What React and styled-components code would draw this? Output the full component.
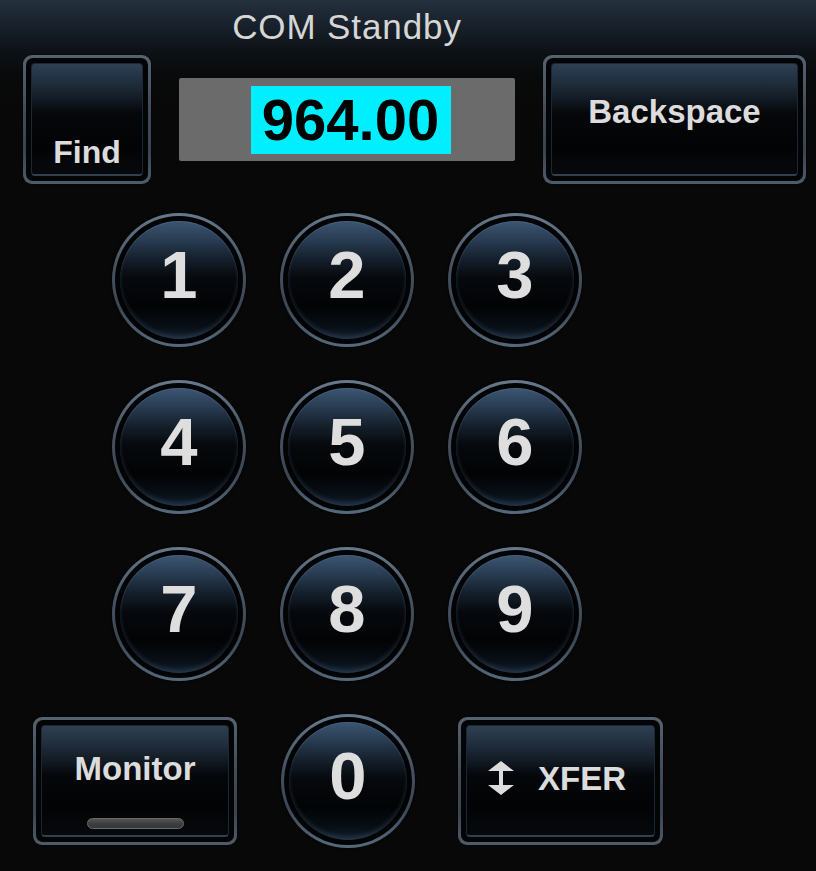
import React from "react";
import styled, { createGlobalStyle } from "styled-components";

const Global = createGlobalStyle`
  html, body { margin: 0; padding: 0; }
  body {
    width: 816px;
    height: 871px;
    overflow: hidden;
    background:
      linear-gradient(180deg, #24303d 0px, #18212b 25px, #0d1217 50px, #090a0b 75px, #080808 110px) no-repeat,
      #080808;
    font-family: "Liberation Sans", Arial, sans-serif;
  }
`;

const Page = styled.div`
  width: 816px;
  height: 871px;
  box-sizing: border-box;
`;

const Header = styled.div`
  display: grid;
  grid-template-columns: 128px 336px 263px;
  grid-template-rows: 50px 129px;
  column-gap: 28px;
  row-gap: 5px;
  padding-left: 23px;
`;

const Title = styled.div`
  grid-column: 2;
  grid-row: 1;
  display: flex;
  align-items: center;
  justify-content: center;
  color: #d6d6d6;
  font-size: 35px;
  letter-spacing: 0.9px;
  line-height: 1;
  padding-top: 2px;
`;

const Frame = styled.div`
  grid-row: ${(p) => p.$row || "auto"};
  width: ${(p) => p.$w}px;
  height: ${(p) => p.$h}px;
  box-sizing: border-box;
  border-radius: 9px;
  padding: 3px;
  background: linear-gradient(180deg, #56636f 0%, #404b57 45%, #3a4551 75%, #4e5c6a 100%);
  box-shadow: 0 0 2px rgba(0, 0, 0, 0.8);
`;

const Gap = styled.div`
  height: 100%;
  box-sizing: border-box;
  border-radius: 7px;
  padding: 5px;
  background: #030405;
`;

const Panel = styled.div`
  height: 100%;
  box-sizing: border-box;
  border-radius: 4px;
  border: 1px solid #1d2733;
  border-bottom: 2px solid #33404e;
  background: linear-gradient(
    180deg,
    #2e4053 0%,
    #1f2c3a 18%,
    #121a23 32%,
    #05070a 45%,
    #020304 75%,
    #06090c 100%
  );
  display: flex;
  flex-direction: column;
  align-items: center;
  justify-content: ${(p) => p.$justify || "center"};
  gap: ${(p) => p.$gap || 0}px;
  padding-bottom: ${(p) => p.$pb || 0}px;
  padding-right: ${(p) => p.$pr || 0}px;
  color: #dcdcdc;
  font-weight: bold;
  font-size: ${(p) => p.$fs || 33}px;
  line-height: 1;
`;

const Row = styled.div`
  display: flex;
  align-items: center;
  gap: ${(p) => p.$gap}px;
`;

const Label = styled.span`
  margin-top: ${(p) => p.$mt || 0}px;
`;

const Display = styled.div`
  grid-column: 2;
  grid-row: 2;
  align-self: center;
  height: 83px;
  background: #6b6b6b;
  border-radius: 2px;
  display: flex;
  align-items: center;
  justify-content: center;
  padding-left: 8px;
  box-sizing: border-box;
`;

const Freq = styled.div`
  background: #00effe;
  color: #000;
  font-weight: bold;
  font-size: 58px;
  height: 68px;
  line-height: 68px;
  padding: 0 12px 0 11px;
  box-sizing: border-box;
`;

const Keypad = styled.div`
  display: grid;
  grid-template-columns: repeat(3, 168px);
  grid-auto-rows: 167px;
  margin-top: 12px;
  padding-left: 95px;
  justify-items: center;
  align-items: center;
`;

const Ring = styled.div`
  width: 134px;
  height: 134px;
  box-sizing: border-box;
  border-radius: 50%;
  padding: 3px;
  background: linear-gradient(180deg, #66788a 0%, #45535f 40%, #3b4753 70%, #566a7d 100%);
  box-shadow: 0 0 3px rgba(0, 0, 0, 0.9);
`;

const RingGap = styled.div`
  width: 100%;
  height: 100%;
  box-sizing: border-box;
  border-radius: 50%;
  padding: 5px;
  background: #020305;
`;

const Disc = styled.div`
  width: 100%;
  height: 100%;
  box-sizing: border-box;
  border-radius: 50%;
  background: linear-gradient(
    180deg,
    #3c5672 0%,
    #2a3e54 15%,
    #15202c 32%,
    #06090d 48%,
    #020304 72%,
    #080f16 90%,
    #142230 100%
  );
  box-shadow: inset 0 -3px 4px rgba(90, 120, 150, 0.25), inset 0 1px 1px rgba(90, 120, 150, 0.4);
  display: flex;
  align-items: center;
  justify-content: center;
  padding-bottom: 10px;
  color: #dedede;
  font-weight: bold;
  font-size: 67px;
  line-height: 1;
`;

const Bottom = styled.div`
  display: flex;
  align-items: center;
  height: 167px;
  padding-left: 33px;
`;

const ZeroSlot = styled.div`
  margin: 0 43px 0 44px;
`;

const Bar = styled.div`
  width: 97px;
  height: 11px;
  box-sizing: border-box;
  border-radius: 6px;
  border: 1px solid #6a6a6a;
  background: linear-gradient(180deg, #555 0%, #3f3f3f 50%, #353535 100%);
`;

const Arrow = () => (
  <svg width="26" height="34" viewBox="0 0 26 34">
    <polygon points="13,0 26,10 15,10 15,24 26,24 13,34 0,24 11,24 11,10 0,10" fill="#dcdcdc" />
  </svg>
);

const Key = ({ n }) => (
  <Ring>
    <RingGap>
      <Disc>{n}</Disc>
    </RingGap>
  </Ring>
);

const RectButton = ({ w, h, row, children, ...rest }) => (
  <Frame $w={w} $h={h} $row={row}>
    <Gap>
      <Panel {...rest}>{children}</Panel>
    </Gap>
  </Frame>
);

export default function App() {
  return (
    <Page>
      <Global />
      <Header>
        <Title>COM Standby</Title>
        <RectButton w={128} h={129} row={2} $justify="flex-end" $pb={6} $fs={32}>
          Find
        </RectButton>
        <Display>
          <Freq>964.00</Freq>
        </Display>
        <RectButton w={263} h={129} row={2} $pb={16}>
          Backspace
        </RectButton>
      </Header>
      <Keypad>
        {[1, 2, 3, 4, 5, 6, 7, 8, 9].map((n) => (
          <Key key={n} n={n} />
        ))}
      </Keypad>
      <Bottom>
        <RectButton w={204} h={128} $gap={33}>
          <Label $mt={21}>Monitor</Label>
          <Bar />
        </RectButton>
        <ZeroSlot>
          <Key n={0} />
        </ZeroSlot>
        <RectButton w={205} h={128} $pb={4} $pr={7}>
          <Row $gap={24}>
            <Arrow />
            <span>XFER</span>
          </Row>
        </RectButton>
      </Bottom>
    </Page>
  );
}
